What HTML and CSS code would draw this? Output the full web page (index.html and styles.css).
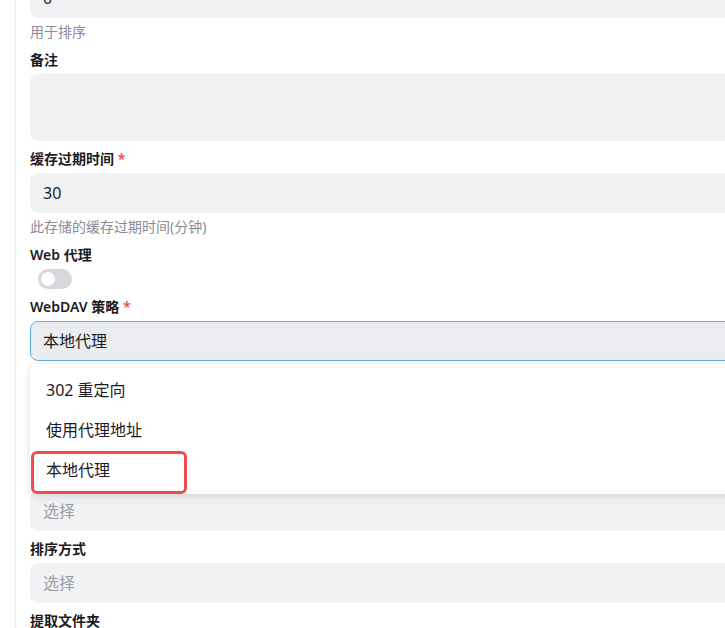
FILE: index.html
```html
<!DOCTYPE html>
<html lang="zh-CN">
<head>
  <meta charset="UTF-8">
  <meta name="viewport" content="width=device-width, initial-scale=1.0">
  <title>存储设置</title>
  <link rel="stylesheet" href="styles.css">
</head>
<body>
  <div class="panel">
    <form class="form">
      <div class="field">
        <input class="input" type="text" value="0">
        <div class="help">用于排序</div>
      </div>

      <div class="field">
        <label class="label">备注</label>
        <textarea class="input textarea"></textarea>
      </div>

      <div class="field">
        <label class="label">缓存过期时间 <span class="req">*</span></label>
        <input class="input" type="text" value="30">
        <div class="help">此存储的缓存过期时间(分钟)</div>
      </div>

      <div class="field">
        <label class="label">Web 代理</label>
        <span class="switch"><span class="knob"></span></span>
      </div>

      <div class="field">
        <label class="label">WebDAV 策略 <span class="req">*</span></label>
        <div class="select-wrap">
          <div class="input select is-open">本地代理</div>
          <ul class="menu">
            <li class="menu-item">302 重定向</li>
            <li class="menu-item">使用代理地址</li>
            <li class="menu-item">本地代理</li>
            <span class="mark"></span>
          </ul>
        </div>
        <div class="help help-lg">WebDAV 策略</div>
      </div>

      <div class="field">
        <label class="label">下载代理 URL</label>
        <input class="input" type="text">
      </div>

      <div class="field">
        <label class="label">排序</label>
        <div class="input placeholder">选择</div>
      </div>

      <div class="field">
        <label class="label">排序方式</label>
        <div class="input placeholder">选择</div>
      </div>

      <div class="field">
        <label class="label">提取文件夹</label>
        <div class="input placeholder">选择</div>
      </div>
    </form>
  </div>
</body>
</html>
```

FILE: styles.css
```css
html, body {
  overflow: hidden;
}
body {
  margin: 0;
  background: #fff;
  font-family: "Noto Sans", "Noto Sans CJK SC", sans-serif;
  color: #1b1b1f;
}
.panel {
  margin-left: 14px;
  border-left: 2px solid #f3f3f5;
  padding-left: 14px;
  width: 760px;
}
.form {
  margin-top: -22px;
}
.field {
  display: flex;
  flex-direction: column;
  align-items: flex-start;
  margin-bottom: 8px;
}
.label {
  font-size: 14px;
  font-weight: 600;
  line-height: 20px;
  margin-bottom: 4px;
}
.req {
  color: #e5484d;
}
.input {
  box-sizing: border-box;
  width: 100%;
  height: 40px;
  padding: 0 12px;
  border: 1px solid transparent;
  border-radius: 8px;
  background: #f1f2f4;
  font-family: inherit;
  font-size: 16px;
  line-height: 38px;
  color: #1b1b1f;
  outline: none;
}
.textarea {
  height: 67px;
  resize: none;
}
.placeholder {
  color: #9a9da4;
}
.help {
  margin-top: 4px;
  font-size: 14px;
  line-height: 20px;
  color: #868b94;
}
.help-lg {
  margin-top: 6px;
}
.switch {
  display: block;
  position: relative;
  width: 34px;
  height: 20px;
  margin-left: 8px;
  border-radius: 10px;
  background: #d5d7db;
}
.knob {
  position: absolute;
  left: 3px;
  top: 3px;
  width: 14px;
  height: 14px;
  border-radius: 50%;
  background: #fff;
}
.select-wrap {
  position: relative;
  width: 100%;
}
.select.is-open {
  border-color: #60aee9;
  background: #ebecef;
}
.menu {
  position: absolute;
  left: 0;
  top: 43px;
  z-index: 5;
  width: 100%;
  margin: 0;
  padding: 6px 0 4px;
  list-style: none;
  background: #fff;
  border-radius: 6px;
  box-shadow: 0 2px 8px rgba(0, 0, 0, 0.13);
}
.menu-item {
  height: 40px;
  line-height: 40px;
  padding: 0 16px;
  font-size: 16px;
}
.mark {
  position: absolute;
  left: 1px;
  top: 87px;
  width: 156px;
  height: 43px;
  box-sizing: border-box;
  border: 3px solid #f04b4b;
  border-radius: 6px;
}
```
